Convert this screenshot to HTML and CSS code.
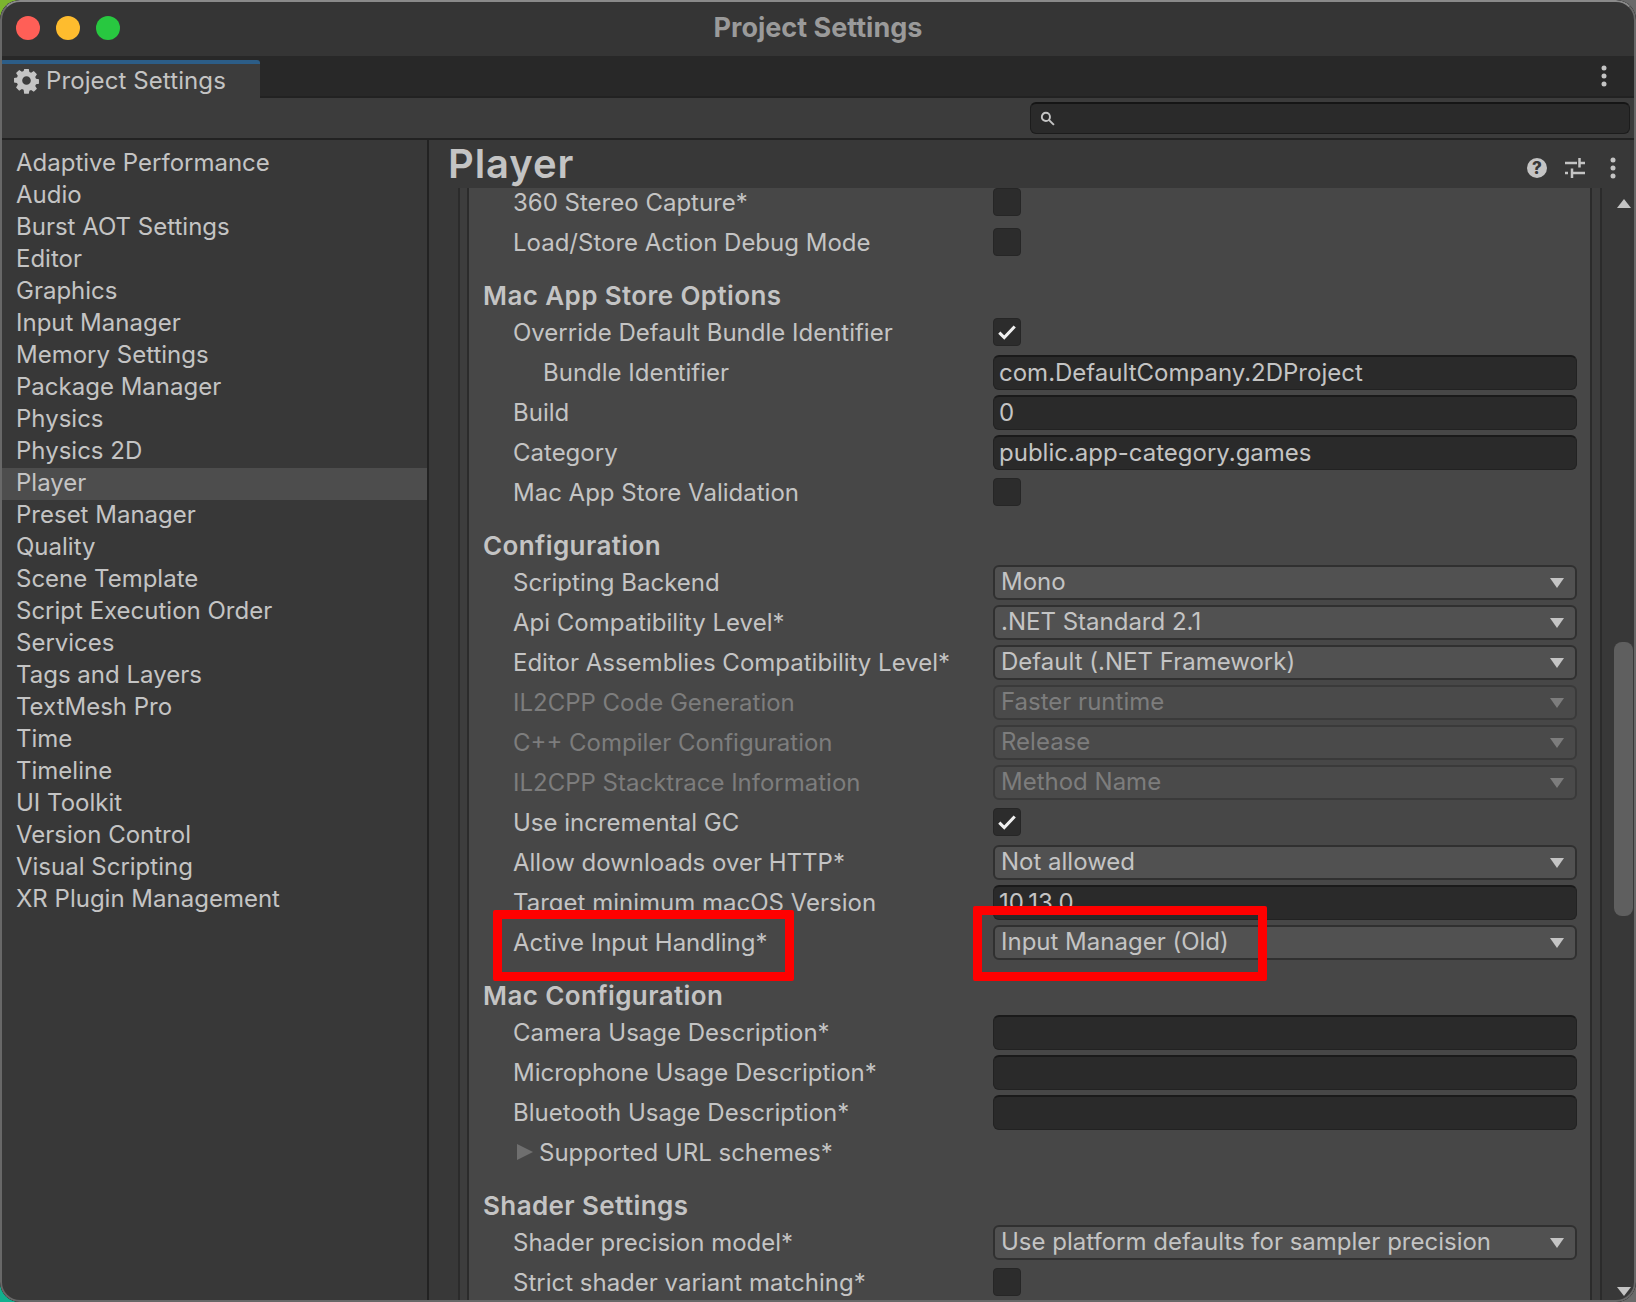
FILE: index.html
```html
<!DOCTYPE html>
<html>
<head>
<meta charset="utf-8">
<title>Project Settings</title>
<link rel="stylesheet" href="styles.css">
</head>
<body>
<div class="window">
	<div class="titlebar">
		<div class="lights"><i class="light red"></i><i class="light yellow"></i><i class="light green"></i></div>
		<div class="wintitle">Project Settings</div>
	</div>
	<div class="tabbar">
		<div class="tab">
			<svg class="gear" viewBox="0 0 24 24"><path fill-rule="evenodd" d="M9.600 0h4.800l.6 3.200 1.800.8 2.800-1.800 3.300 3.300-1.800 2.800.8 1.800 3.100.6v4.600l-3.100.6-.8 1.800 1.800 2.800-3.300 3.300-2.800-1.800-1.800.8-.6 3.100H9.600L9 21.600l-1.800-.8-2.800 1.800-3.300-3.300 1.800-2.800-.8-1.800L-1 14.100V9.500l3.100-.6.8-1.800-1.800-2.800 3.300-3.300L7.200 2.800l1.800-.8zM12 7.500a4.500 4.500 0 1 0 0 9 4.500 4.500 0 0 0 0-9z"/></svg>
			<span>Project Settings</span>
		</div>
		<svg class="dots tabdots" viewBox="0 0 6 22"><circle cx="3" cy="3" r="2.500"/><circle cx="3" cy="11" r="2.500"/><circle cx="3" cy="19" r="2.500"/></svg>
	</div>
	<div class="toolbar">
		<div class="search">
			<svg viewBox="0 0 14 14"><circle cx="5.500" cy="5.500" r="3.800"/><path d="M8.500 8.500l4.500 4.500"/></svg>
		</div>
	</div>
	<div class="panes">
		<ul class="sidebar">
			<li>Adaptive Performance</li>
			<li>Audio</li>
			<li>Burst AOT Settings</li>
			<li>Editor</li>
			<li>Graphics</li>
			<li>Input Manager</li>
			<li>Memory Settings</li>
			<li>Package Manager</li>
			<li>Physics</li>
			<li>Physics 2D</li>
			<li class="active">Player</li>
			<li>Preset Manager</li>
			<li>Quality</li>
			<li>Scene Template</li>
			<li>Script Execution Order</li>
			<li>Services</li>
			<li>Tags and Layers</li>
			<li>TextMesh Pro</li>
			<li>Time</li>
			<li>Timeline</li>
			<li>UI Toolkit</li>
			<li>Version Control</li>
			<li>Visual Scripting</li>
			<li>XR Plugin Management</li>
		</ul>
		<div class="main">
			<div class="mainhead">
				<h1>Player</h1>
				<div class="headicons">
					<svg class="help" viewBox="0 0 20 20"><circle cx="10" cy="10" r="10"/><text x="10" y="16" text-anchor="middle">?</text></svg>
					<svg class="sliders" viewBox="0 0 20 20"><path d="M0 5h12M14.500 0v9.500M14.500 5h5.500M0 15h3M7 10.500v9.500M7 15h13"/></svg>
					<svg class="dots" viewBox="0 0 6 22"><circle cx="3" cy="3" r="2.500"/><circle cx="3" cy="11" r="2.500"/><circle cx="3" cy="19" r="2.500"/></svg>
				</div>
			</div>
			<div class="content">
				<div class="groove">
					<div class="groove_in">
						<div class="form">
							<div class="row"><label>360 Stereo Capture*</label><span class="check"></span></div>
							<div class="row"><label>Load/Store Action Debug Mode</label><span class="check"></span></div>

							<h2>Mac App Store Options</h2>
							<div class="row"><label>Override Default Bundle Identifier</label><span class="check on"><svg viewBox="0 0 20 20"><path d="M3 10.500l4.500 4.500L17 5"/></svg></span></div>
							<div class="row sub"><label>Bundle Identifier</label><span class="field">com.DefaultCompany.2DProject</span></div>
							<div class="row"><label>Build</label><span class="field">0</span></div>
							<div class="row"><label>Category</label><span class="field">public.app-category.games</span></div>
							<div class="row"><label>Mac App Store Validation</label><span class="check"></span></div>

							<h2>Configuration</h2>
							<div class="row"><label>Scripting Backend</label><span class="select">Mono</span></div>
							<div class="row"><label>Api Compatibility Level*</label><span class="select">.NET Standard 2.1</span></div>
							<div class="row"><label>Editor Assemblies Compatibility Level*</label><span class="select">Default (.NET Framework)</span></div>
							<div class="row off"><label>IL2CPP Code Generation</label><span class="select">Faster runtime</span></div>
							<div class="row off"><label>C++ Compiler Configuration</label><span class="select">Release</span></div>
							<div class="row off"><label>IL2CPP Stacktrace Information</label><span class="select">Method Name</span></div>
							<div class="row"><label>Use incremental GC</label><span class="check on"><svg viewBox="0 0 20 20"><path d="M3 10.500l4.500 4.500L17 5"/></svg></span></div>
							<div class="row"><label>Allow downloads over HTTP*</label><span class="select">Not allowed</span></div>
							<div class="row"><label>Target minimum macOS Version</label><span class="field">10.13.0</span></div>
							<div class="row"><label>Active Input Handling*</label><span class="select">Input Manager (Old)</span></div>

							<h2>Mac Configuration</h2>
							<div class="row"><label>Camera Usage Description*</label><span class="field"></span></div>
							<div class="row"><label>Microphone Usage Description*</label><span class="field"></span></div>
							<div class="row"><label>Bluetooth Usage Description*</label><span class="field"></span></div>
							<div class="row fold"><i class="arrow"></i><label>Supported URL schemes*</label></div>

							<h2>Shader Settings</h2>
							<div class="row"><label>Shader precision model*</label><span class="select">Use platform defaults for sampler precision</span></div>
							<div class="row"><label>Strict shader variant matching*</label><span class="check"></span></div>
						</div>
					</div>
				</div>
				<div class="scrollbar">
					<i class="up"></i>
					<i class="thumb"></i>
					<i class="down"></i>
				</div>
			</div>
		</div>
	</div>
	<div class="mark mark_label"></div>
	<div class="mark mark_value"></div>
</div>
</body>
</html>
```

FILE: styles.css
```css
html,body,ul,li,h1,h2{ margin:0; padding:0; list-style:none;}
html,body{ height:100%; overflow:hidden;}
body{ background:linear-gradient(#7cb52e,#7cb52e) 0 0/30px 30px no-repeat, linear-gradient(#12b08f,#12b08f) 0 100%/30px 30px no-repeat, #6a6a6a; font-family:Inter,"Noto Sans",sans-serif; font-size:24px; color:#c4c4c4;}

.window{ position:relative; box-sizing:border-box; height:1302px; display:flex; flex-direction:column; overflow:hidden; border-radius:20px; background:#383838;}
.window::after{ content:""; position:absolute; top:0; right:0; bottom:0; left:0; border:2px solid #686868; border-top-color:#8a8a8a; border-radius:20px; pointer-events:none;}

.titlebar{ height:56px; flex:none; display:flex; align-items:center; position:relative; background:#353535;}
.lights{ display:flex; gap:16px; padding:0 0 0 16px;}
.light{ display:block; width:24px; height:24px; border-radius:50%;}
.red{ background:#ff5f57;}
.yellow{ background:#febc2e;}
.green{ background:#28c840;}
.wintitle{ position:absolute; left:0; right:0; top:0; line-height:55px; text-align:center; font-weight:700; font-size:27px; color:#9a9a9a;}

.tabbar{ height:42px; flex:none; display:flex; justify-content:space-between; align-items:center; box-sizing:border-box; background:#282828; border-bottom:2px solid #222;}
.tab{ box-sizing:border-box; width:260px; height:38px; margin:4px 0 -2px; display:flex; align-items:center; gap:8px; padding:0 0 2px 15px; background:#3c3c3c; border-top:4px solid #2c5d87; border-radius:3px 3px 0 0; letter-spacing:.1px;}
.gear{ width:23px; height:23px; fill:#c4c4c4; overflow:visible;}
.dots{ width:6px; height:22px; fill:#c4c4c4;}
.tabdots{ margin-right:29px;}

.toolbar{ height:42px; flex:none; box-sizing:border-box; display:flex; justify-content:flex-end; padding:4px 6px 0 0; background:#3c3c3c; border-bottom:2px solid #222;}
.search{ box-sizing:border-box; width:600px; height:32px; display:flex; align-items:center; padding-left:9px; background:#2a2a2a; border:1px solid #1c1c1c; border-top:2px solid #151515; border-radius:6px;}
.search svg{ width:15px; height:15px; fill:none; stroke:#c4c4c4; stroke-width:1.800;}

.panes{ flex:1; min-height:0; display:flex;}
.sidebar{ box-sizing:border-box; width:429px; flex:none; padding-top:8px; border-right:2px solid #222; background:#383838;}
.sidebar li{ height:32px; line-height:30px; padding-left:16px; white-space:nowrap;}
.sidebar .active{ background:#4d4d4d;}

.main{ flex:1; min-width:0; display:flex; flex-direction:column;}
.mainhead{ height:48px; flex:none; display:flex; justify-content:space-between; align-items:center; padding:0 20px 0 19px; background:#383838;}
.mainhead h1{ font-size:40px; font-weight:600; letter-spacing:.9px; color:#c4c4c4; line-height:48px;}
.headicons{ display:flex; align-items:center; padding-top:8px;}
.help{ width:20px; height:20px; fill:#c4c4c4; margin-right:18px;}
.help text{ fill:#383838; font-size:17px; font-weight:800;}
.sliders{ width:20px; height:20px; fill:none; stroke:#c4c4c4; stroke-width:2.500; margin-right:25px;}

.content{ flex:1; min-height:0; display:flex;}
.groove{ flex:1; min-width:0; display:flex; overflow:hidden; padding:0 8px 0 29px; background:#383838;}
.groove_in{ flex:1; min-width:0; display:flex; padding:0 8px 0 7px; background:#3d3d3d; border-left:2px solid #2b2b2b; border-right:2px solid #2b2b2b;}
.form{ flex:1; min-width:0; padding:0 13px 0 14px; background:#474747; border-left:2px solid #2b2b2b; border-right:2px solid #2b2b2b;}
.form > :first-child{ margin-top:-6px;}

h2{ height:50px; line-height:67px; font-size:26px; font-weight:600; letter-spacing:.4px; color:#c4c4c4;}
.row{ height:40px; display:flex; align-items:center; padding-left:30px;}
.row label{ width:480px; flex:none; white-space:nowrap;}
.row.sub label{ padding-left:30px; box-sizing:border-box;}
.row.off{ color:#7d7d7d;}
.fold label{ width:auto;}
.arrow{ width:0; height:0; margin:0 6px 0 4px; border-left:16px solid #6f6f6f; border-top:8.500px solid transparent; border-bottom:8.500px solid transparent;}

.check{ box-sizing:border-box; width:28px; height:28px; background:#2c2c2c; border:1px solid #262626; border-radius:4px; display:flex; align-items:center; justify-content:center;}
.check svg{ width:22px; height:22px; fill:none; stroke:#f0f0f0; stroke-width:2.800;}
.field{ box-sizing:border-box; flex:1; height:35px; line-height:32px; padding-left:5px; background:#2a2a2a; border-top:2px solid #1a1a1a; border-left:1px solid #222; border-right:1px solid #222; border-bottom:1px solid #222; border-radius:6px; overflow:hidden;}
.select{ box-sizing:border-box; flex:1; height:35px; line-height:29px; padding-left:6px; position:relative; background:#515151; border:2px solid #303030; border-radius:6px;}
.select::after{ content:""; position:absolute; right:11px; top:11px; width:0; height:0; border-top:10px solid #c4c4c4; border-left:7.500px solid transparent; border-right:7.500px solid transparent;}
.off .select{ background:#4a4a4a; border-color:#3a3a3a;}
.off .select::after{ border-top-color:#7d7d7d;}

.scrollbar{ width:26px; flex:none; position:relative; background:#383838;}
.up,.down{ position:absolute; right:5px; width:0; height:0; border-left:7.500px solid transparent; border-right:7.500px solid transparent;}
.up{ top:11px; border-bottom:9px solid #c4c4c4;}
.down{ bottom:6px; border-top:9px solid #c4c4c4;}
.thumb{ position:absolute; left:4px; width:19px; top:454px; height:274px; background:#5f5f5f; border-radius:8px;}

.mark{ position:absolute; box-sizing:border-box; border:9px solid #ff0000; border-radius:2px;}
.mark_label{ left:493px; top:910px; width:301px; height:71px;}
.mark_value{ left:973px; top:906px; width:294px; height:75px;}
```
